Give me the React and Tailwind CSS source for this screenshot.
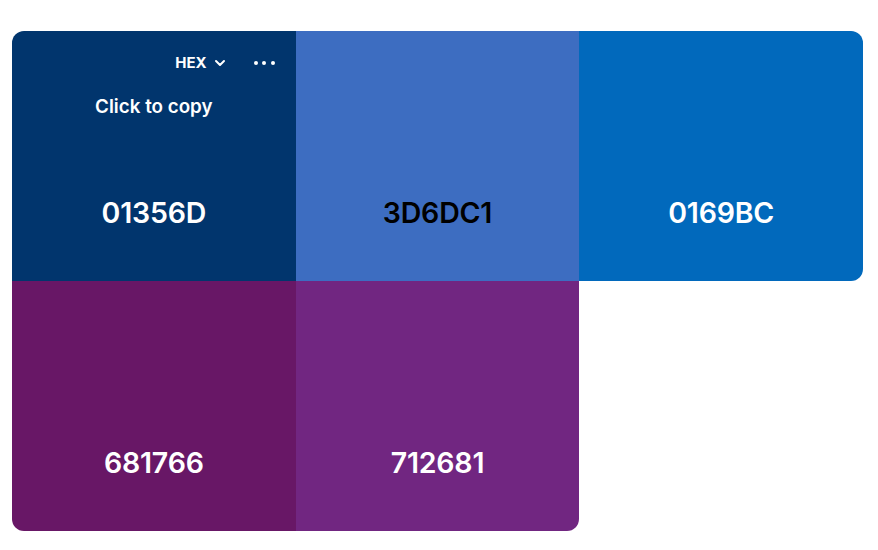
const swatches = [
  { hex: "01356D", bg: "bg-[#01356D]", text: "text-white", corner: "rounded-tl-xl", tools: true },
  { hex: "3D6DC1", bg: "bg-[#3D6DC1]", text: "text-black", corner: "" },
  { hex: "0169BC", bg: "bg-[#0169BC]", text: "text-white", corner: "rounded-tr-xl rounded-br-xl" },
  { hex: "681766", bg: "bg-[#681766]", text: "text-white", corner: "rounded-bl-xl" },
  { hex: "712681", bg: "bg-[#712681]", text: "text-white", corner: "rounded-br-xl" },
];

const Swatch = ({ hex, bg, text, corner, tools }) => (
  <div className={`relative h-[250px] flex flex-col items-center ${bg} ${text} ${corner}`}>
    {tools && (
      <>
        <div className="absolute top-[21px] right-[21px] flex items-center gap-[28px] text-white">
          <div className="flex items-center gap-[7px] text-[15px] font-bold">
            <span>HEX</span>
            <svg width="12" height="8" viewBox="0 0 12 8" fill="none">
              <path d="M2 2L6 6L10 2" stroke="white" strokeWidth="2" strokeLinecap="round" strokeLinejoin="round" />
            </svg>
          </div>
          <div className="flex items-center gap-[4.5px]">
            <span className="w-[4px] h-[4px] rounded-full bg-white"></span>
            <span className="w-[4px] h-[4px] rounded-full bg-white"></span>
            <span className="w-[4px] h-[4px] rounded-full bg-white"></span>
          </div>
        </div>
        <div className="absolute top-[62px] left-0 right-0 text-center text-[18.8px] font-semibold text-white">
          Click to copy
        </div>
      </>
    )}
    <div className="mt-auto mb-[46px] text-[28.5px] font-semibold tracking-[-0.2px]">{hex}</div>
  </div>
);

const App = () => {
  return (
    <div className="w-[878px] h-[550px] bg-white pt-[31px] pl-3" style={{ fontFamily: "Inter, 'Liberation Sans', sans-serif" }}>
      <div className="w-[851px] grid grid-cols-3">
        {swatches.map((s) => (
          <Swatch key={s.hex} {...s} />
        ))}
      </div>
    </div>
  );
};

export default App;
